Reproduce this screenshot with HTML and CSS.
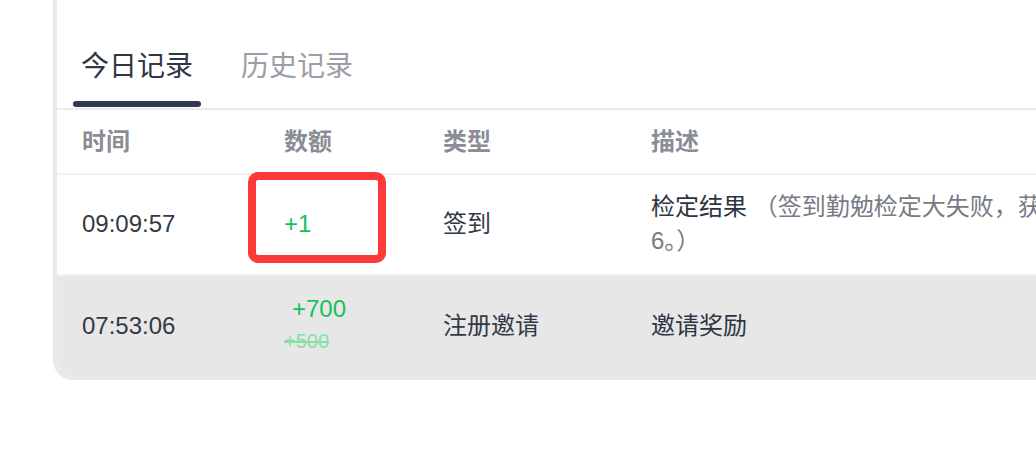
FILE: index.html
```html
<!DOCTYPE html>
<html lang="zh-CN">

<head>
    <meta charset="UTF-8" />
    <meta name="viewport" content="width=device-width, initial-scale=1.0" />
    <title>积分记录</title>
    <link rel="stylesheet" href="styles.css">
</head>

<body>

    <div class="page">
        <div class="card">

            <div class="tabs">
                <div class="tab active">今日记录</div>
                <div class="tab">历史记录</div>
            </div>

            <div class="row head">
                <div>时间</div>
                <div>数额</div>
                <div>类型</div>
                <div>描述</div>
            </div>

            <div class="row first">
                <div>09:09:57</div>
                <div class="amount"><span class="amount-main">+1</span></div>
                <div>签到</div>
                <div class="desc">
                    <span class="desc-title">检定结果</span>
                    <span class="desc-note">（签到勤勉检定大失败，获得签到积分，检定值为6。）</span>
                </div>
                <span class="highlight"></span>
            </div>

            <div class="row shaded">
                <div>07:53:06</div>
                <div class="amount">
                    <div class="amount-main indent">+700</div>
                    <div class="amount-old">+500</div>
                </div>
                <div>注册邀请</div>
                <div class="desc">
                    <span class="desc-title">邀请奖励</span>
                </div>
            </div>

        </div>
    </div>

</body>

</html>
```

FILE: styles.css
```css
html,
body {
    margin: 0;
    overflow: hidden;
    background-color: #ffffff;
}

body {
    font-family: "Liberation Sans", "Noto Sans CJK SC", sans-serif;
    color: #323a46;
}

.page {
    padding-left: 53px;
}

.card {
    width: 1300px;
    border-left: 4px solid #e9e9eb;
    border-bottom: 4px solid #e9e9eb;
    border-radius: 0 0 0 20px;
    overflow: hidden;
}

/* tabs */
.tabs {
    display: flex;
    gap: 32px;
    padding: 46px 16px 0;
    border-bottom: 2px solid #ebebec;
}

.tab {
    padding: 0 8px;
    font-size: 28px;
    line-height: 42px;
    color: #9b9ea4;
    cursor: pointer;
}

.tab::after {
    content: "";
    display: block;
    height: 6px;
    margin: 13px -8px 1px;
    border-radius: 3px;
}

.tab.active {
    color: #2f3645;
}

.tab.active::after {
    background-color: #313a4c;
}

/* table rows */
.row {
    position: relative;
    display: grid;
    grid-template-columns: 202px 159px 208px 640px;
    align-items: center;
    padding-left: 25px;
    font-size: 24px;
    line-height: 34px;
    border-bottom: 2px solid #f1f1f1;
}

.row.head {
    height: 63px;
    font-weight: bold;
    color: #8a8d94;
}

.row.first {
    padding-top: 15px;
    padding-bottom: 16px;
}

.row.shaded {
    padding-top: 18px;
    padding-bottom: 18px;
    background-color: #e7e7e7;
    border-bottom: none;
}

.amount-main {
    color: #13c25a;
    line-height: 30px;
}

.amount-main.indent {
    margin-left: 8px;
}

.amount-old {
    font-size: 20px;
    line-height: 34px;
    color: #86dfa6;
    text-decoration: line-through;
}

.desc-title {
    color: #2e3542;
}

.desc-note {
    color: #777b84;
}

.highlight {
    position: absolute;
    left: 191px;
    top: -3px;
    width: 138px;
    height: 91px;
    box-sizing: border-box;
    border: 8px solid #fd3a3a;
    border-radius: 10px;
}
```
